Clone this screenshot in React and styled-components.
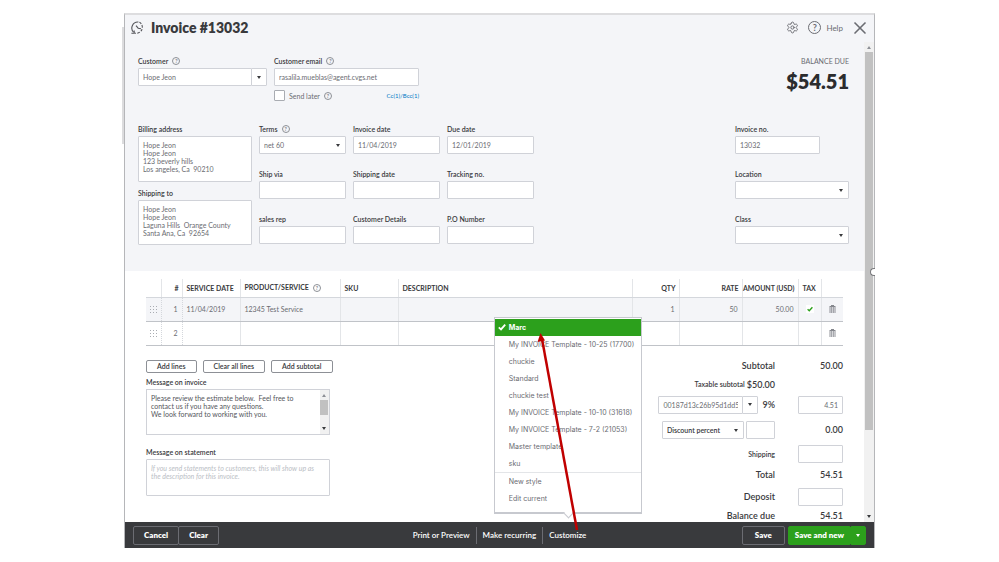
import React, { useId, useState } from 'react'
import styled, { createGlobalStyle } from 'styled-components'
import { Settings, X } from 'lucide-react'

const GlobalStyle = createGlobalStyle`
  * {
    box-sizing: border-box;
  }
  body {
    margin: 0;
    background: #fff;
    color: #393a3d;
    font-family: Lato, 'Liberation Sans', sans-serif;
    font-size: 7px;
  }
  button, input, select, textarea {
    margin: 0;
    font-family: inherit;
    font-size: inherit;
    color: inherit;
  }
`

const Page = styled.div`
  display: flex;
  height: 100vh;
  padding: 13px 124px 14px;
`
const Shell = styled.div`
  position: relative;
  flex: 1;
  min-width: 0;
  display: flex;
  flex-direction: column;
  border: solid #b5b6b9;
  border-width: 0 1px 0 1px;
  border-top: 2px solid #dddddf;

  &::before {
    content: '';
    position: absolute;
    top: 12px;
    left: -3px;
    width: 2px;
    height: 117px;
    background: #dcdcde;
  }
`
const Handle = styled.span`
  position: absolute;
  top: 253px;
  right: -1px;
  width: 5px;
  height: 8px;
  border: 1px solid #77787b;
  border-right: 0;
  border-radius: 4px 0 0 4px;
  background: #fff;
`
const Header = styled.header`
  display: flex;
  align-items: center;
  height: 27px;
  padding: 0 4px 2px 6px;
  background: #f4f5f8;
`
const Title = styled.h1`
  margin: 0 auto 0 6px;
  font-size: 14px;
  line-height: 16px;
  font-weight: 800;
`
const IconButton = styled.button`
  display: flex;
  align-items: center;
  gap: 5px;
  margin-left: ${props => (props.$tight ? 7 : 9)}px;
  padding: 0;
  border: 0;
  background: none;
  color: #6b6c72;
  font-size: 8px;
`
const Question = styled.span`
  display: inline-flex;
  align-items: center;
  justify-content: center;
  width: ${props => (props.$large ? 13 : 8)}px;
  height: ${props => (props.$large ? 13 : 8)}px;
  border: 1px solid ${props => (props.$large ? '#6b6c72' : '#8d9096')};
  border-radius: 50%;
  color: #6b6c72;
  font-size: ${props => (props.$large ? 9 : 6)}px;
  line-height: 1;
  font-weight: ${props => (props.$large ? 700 : 400)};
  vertical-align: middle;
`
const Body = styled.div`
  flex: 1;
  min-height: 0;
  display: flex;
  background: #f4f5f8;
`
const Content = styled.main`
  flex: 1;
  min-width: 0;
  overflow: hidden;
  background: #fff;
`
const ScrollTrack = styled.div`
  display: flex;
  flex-direction: column;
  align-items: center;
  width: 10px;
  padding: 4px 0;
  background: #f1f1f1;
`
const Thumb = styled.div`
  width: 8px;
  height: ${props => props.$size};
  margin: 3px 0 auto;
  background: #c1c1c1;
`
const Arrow = styled.span`
  width: 0;
  height: 0;
  border: 2px solid transparent;
  border-${props => (props.$up ? 'bottom' : 'top')}: 3px solid ${props => props.$color || '#393a3d'};
  border-${props => (props.$up ? 'top' : 'bottom')}: 0;
`

const FormSection = styled.section`
  padding: 14px 15px 26px 13px;
  background: #f4f5f8;
`
const FormRow = styled.div`
  display: flex;
  gap: 7px;
`
const TopRow = styled(FormRow)`
  height: 68px;
`
const Column = styled.div`
  display: flex;
  flex-direction: column;
  gap: ${props => props.$gap || 0}px;
  width: ${props => props.$width}px;
  margin-left: ${props => (props.$right ? 'auto' : 0)};
`
const FieldGrid = styled.div`
  display: grid;
  grid-template-columns: repeat(3, 87px);
  gap: 15px 7px;
  align-content: start;
`
const FieldBox = styled.div`
  display: flex;
  flex-direction: column;
  gap: 2px;
`
const Label = styled.label`
  display: flex;
  align-items: center;
  gap: 4px;
  height: 10px;
  font-size: 7px;
  line-height: 10px;
  font-weight: 600;
  white-space: nowrap;
`
const control = `
  border: 1px solid #d0d2d8;
  border-radius: 1px;
  background: #fff;
  color: #6b6c72;
  font-size: 7px;
  outline: 0;
`
const Input = styled.input`
  ${control}
  width: ${props => (props.$width ? `${props.$width}px` : '100%')};
  height: 18px;
  padding: 0 4px;
  text-align: ${props => props.$align || 'left'};
`
const SelectWrap = styled.div`
  position: relative;
  display: flex;
  width: ${props => (props.$width ? `${props.$width}px` : '100%')};

  ${Arrow} {
    position: absolute;
    right: 6px;
    top: 8px;
    pointer-events: none;
  }
`
const Select = styled.select`
  ${control}
  appearance: none;
  width: 100%;
  height: 18px;
  padding: 0 16px 0 4px;
  color: ${props => (props.$strong ? '#393a3d' : '#6b6c72')};
  font-weight: ${props => (props.$strong ? 600 : 400)};
`
const Combo = styled.div`
  display: flex;
  width: ${props => props.$width}px;

  ${Input} {
    flex: 1;
    min-width: 0;
  }
`
const ComboButton = styled.button`
  ${control}
  display: flex;
  align-items: center;
  justify-content: center;
  width: 16px;
  height: 18px;
  margin-left: -1px;
  padding: 0;
`
const TextArea = styled.textarea`
  ${control}
  display: block;
  width: 100%;
  height: ${props => props.$height}px;
  padding: 4px;
  line-height: 8px;
  resize: none;
  overflow: hidden;

  &::placeholder {
    color: #babec5;
    font-style: italic;
  }
`
const SendRow = styled.div`
  display: flex;
  align-items: center;
  gap: 4px;
  margin-top: 4px;
  color: #6b6c72;
`
const Checkbox = styled.input`
  appearance: none;
  width: 11px;
  height: 11px;
  margin: 0;
  border: 1px solid #a9acb2;
  border-radius: 1px;
  background: #fff;
`
const Link = styled.a`
  margin-left: auto;
  color: #0077c5;
  font-size: 6px;
  text-decoration: none;
`
const BalanceBox = styled.div`
  margin-left: auto;
  color: #6b6c72;
  line-height: 10px;
  text-align: right;
`
const BalanceAmount = styled.div`
  margin-top: 3px;
  color: #2b2c2e;
  font-size: 20px;
  line-height: 24px;
  font-weight: 800;
`

const Lines = styled.section`
  padding: 8px 21px 0;
`
const Table = styled.table`
  width: 100%;
  table-layout: fixed;
  border-collapse: collapse;
`
const Th = styled.th`
  width: ${props => (props.$width ? `${props.$width}px` : 'auto')};
  height: 18px;
  padding: ${props => (props.$align === 'right' ? '0 3px 0 0' : '0 0 0 4px')};
  border-right: 1px solid #e3e5e8;
  border-bottom: 1px solid #d4d7dc;
  font-weight: 700;
  text-align: ${props => props.$align || 'left'};
  white-space: nowrap;

  &:last-child {
    border-right: 0;
  }
  ${Question} {
    margin-left: 4px;
  }
`
const Td = styled.td`
  height: 24px;
  padding: 0 4px;
  border-right: ${props => (props.$dotted ? '1px dotted #d4d7dc' : '1px solid #e3e5e8')};
  border-bottom: 1px solid #c0c3c8;
  background: ${props => (props.$active ? '#f4f5f8' : '#fff')};
  color: #6b6c72;
  text-align: ${props => props.$align || 'left'};
  vertical-align: middle;

  &:last-child {
    border-right: 0;
  }
  svg {
    display: block;
    margin: 0 auto;
  }
`
const CheckTile = styled.span`
  display: block;
  width: 8px;
  margin: 0 auto;
  padding: 1px;
  background: #fff;
`
const CellButton = styled.button`
  display: block;
  margin: 0 auto;
  padding: 0;
  border: 0;
  background: none;
`

const Lower = styled.section`
  display: flex;
  justify-content: space-between;
  padding: 14px 21px 0;
`
const ButtonRow = styled.div`
  display: flex;
  gap: 6px;
  margin-bottom: 4px;
`
const SmallButton = styled.button`
  height: 13px;
  padding: 0 10px;
  border: 1px solid #8d9096;
  border-radius: 2px;
  background: #fff;
  font-size: 7px;
  line-height: 9px;
  font-weight: 600;
  white-space: nowrap;
`
const Messages = styled.div`
  width: 184px;

  ${FieldBox} {
    margin-bottom: 12px;
  }
`
const ScrollingArea = styled.div`
  display: flex;
  border: 1px solid #d0d2d8;

  ${TextArea} {
    border: 0;
    color: #55565b;
  }
`
const Totals = styled.div`
  display: grid;
  grid-template-columns: auto 45px;
  grid-template-rows: 12px 25px 16px 34px 14px 28px 16px 22px;
  column-gap: 23px;
  align-content: start;
  align-items: center;
  justify-items: end;
  font-size: 9px;
  font-weight: 600;
`
const TotalLabel = styled.label`
  font-size: ${props => (props.$small ? 7 : 9)}px;
  white-space: nowrap;
`
const Inline = styled.div`
  display: flex;
  align-items: center;
  gap: ${props => props.$gap}px;
`

const Footer = styled.footer`
  display: flex;
  align-items: center;
  justify-content: space-between;
  height: 26px;
  padding: 0 8px;
  background: #393a3d;
  color: #fff;
`
const FooterGroup = styled.div`
  flex: ${props => (props.$center ? 'none' : '1')};
  display: flex;
  justify-content: ${props => (props.$end ? 'flex-end' : 'flex-start')};
`
const FooterButton = styled.button`
  height: 19px;
  padding: 0 ${props => props.$pad || 10}px;
  border: 1px solid ${props => (props.$primary ? '#2ca01c' : '#6b6c72')};
  border-radius: 2px;
  background: ${props => (props.$primary ? '#2ca01c' : 'transparent')};
  font-size: 8px;
  font-weight: 800;
  white-space: nowrap;

  & + & {
    margin-left: -1px;
  }
`
const SplitButton = styled.div`
  display: flex;
  margin-left: 3px;
`
const FooterLink = styled.button`
  height: 17px;
  padding: 0 6px;
  border: 0;
  background: none;
  font-size: 8px;
  font-weight: 600;
  white-space: nowrap;
`
const FooterItem = styled.div`
  position: relative;
  display: flex;

  & + & {
    border-left: 1px solid #6b6c72;
  }
`
const Menu = styled.div`
  position: absolute;
  bottom: 30px;
  left: 50%;
  width: 148px;
  margin-left: -74px;
  padding: 1px 0 5px;
  border: 1px solid #c7c9cf;
  border-bottom-width: 2px;
  background: #fff;
  font-family: Inter, 'Liberation Sans', sans-serif;

  &::after {
    content: '';
    position: absolute;
    left: 50%;
    bottom: -5px;
    width: 6px;
    height: 6px;
    margin-left: -3px;
    border: solid #c7c9cf;
    border-width: 0 1px 1px 0;
    background: #fff;
    transform: rotate(45deg);
  }
`
const MenuItem = styled.button`
  display: flex;
  align-items: center;
  width: 100%;
  height: 17px;
  padding: 0 0 0 3px;
  border: 0;
  background: ${props => (props.$selected ? '#2ca01c' : '#fff')};
  color: ${props => (props.$selected ? '#fff' : '#6b6c72')};
  font-size: 7px;
  font-weight: ${props => (props.$selected ? 700 : 400)};
  white-space: nowrap;
`
const MenuMark = styled.span`
  flex: none;
  display: flex;
  width: 11px;
`
const MenuDivider = styled.div`
  height: 1px;
  background: #e3e5e8;
`
const Pointer = styled.svg`
  position: absolute;
  bottom: 13px;
  left: 50%;
  margin-left: -32px;
  pointer-events: none;
`

const lines = [
  { id: 1, date: '11/04/2019', product: '12345 Test Service', qty: 1, rate: 50, amount: '50.00', taxed: true },
  { id: 2 },
]

const templates = [
  'Marc',
  'My INVOICE Template - 10-25 (17700)',
  'chuckie',
  'Standard',
  'chuckie test',
  'My INVOICE Template - 10-10 (31618)',
  'My INVOICE Template - 7-2 (21053)',
  'Master template',
  'sku',
]

function HistoryIcon() {
  return (
    <svg width='14' height='14' viewBox='0 0 14 14' fill='none' stroke='#55565b' strokeWidth='1.1'>
      <path d='M2.6 11.2A6 6 0 0 1 7.4 1' />
      <path d='M8.4 1.1A6 6 0 0 1 3.6 12' strokeDasharray='2.6 1.3' />
      <path d='M.4 12.2H3.2V9.4' />
      <path d='M5 4.6L7.2 7.2L10 7.8' />
    </svg>
  )
}

function CheckIcon({ size, color }) {
  return (
    <svg width={size} height={size} viewBox='0 0 8 8' fill='none' stroke={color} strokeWidth='1.8'>
      <path d='M.8 4.4L3 6.4L7.2 1.6' />
    </svg>
  )
}

function GripIcon() {
  return (
    <svg width='7' height='7' viewBox='0 0 7 7' fill='#a9acb2'>
      {[0, 3, 6].map(y => [0, 3, 6].map(x => <rect key={`${x}${y}`} x={x} y={y} width='1' height='1' />))}
    </svg>
  )
}

function TrashIcon() {
  return (
    <svg width='7' height='8' viewBox='0 0 7 8' fill='none' stroke='#85878d'>
      <path d='M.5 1.5H6.5M2 .5H5' />
      <path d='M1 2V8M2.7 2V8M4.3 2V8M6 2V8' strokeWidth='.9' />
    </svg>
  )
}

function Field({ label, help, children }) {
  const id = useId()
  return (
    <FieldBox>
      <Label htmlFor={id}>
        {label}
        {help && <Question>?</Question>}
      </Label>
      {children(id)}
    </FieldBox>
  )
}

function TextField({ label, value = '', width, help }) {
  return (
    <Field label={label} help={help}>
      {id => <Input id={id} defaultValue={value} $width={width} />}
    </Field>
  )
}

function SelectField({ label, value = '', help }) {
  return (
    <Field label={label} help={help}>
      {id => (
        <SelectWrap>
          <Select id={id}>
            <option>{value}</option>
          </Select>
          <Arrow />
        </SelectWrap>
      )}
    </Field>
  )
}

function InvoiceForm() {
  return (
    <FormSection>
      <TopRow>
        <Column $width={129}>
          <Field label='Customer' help>
            {id => (
              <Combo $width={129}>
                <Input id={id} defaultValue='Hope Jeon' />
                <ComboButton aria-label='Show customers'>
                  <Arrow />
                </ComboButton>
              </Combo>
            )}
          </Field>
        </Column>
        <Column $width={145}>
          <TextField label='Customer email' value='rasalila.mueblas@agent.cvgs.net' help />
          <SendRow>
            <Checkbox type='checkbox' id='send-later' />
            <label htmlFor='send-later'>Send later</label>
            <Question>?</Question>
            <Link href='#cc'>Cc(1)/Bcc(1)</Link>
          </SendRow>
        </Column>
        <BalanceBox>
          BALANCE DUE
          <BalanceAmount>$54.51</BalanceAmount>
        </BalanceBox>
      </TopRow>
      <FormRow>
        <Column $width={114} $gap={6}>
          <Field label='Billing address'>
            {id => (
              <TextArea
                id={id}
                $height={46}
                defaultValue={'Hope Jeon\nHope Jeon\n123 beverly hills\nLos angeles, Ca  90210'}
              />
            )}
          </Field>
          <Field label='Shipping to'>
            {id => (
              <TextArea
                id={id}
                $height={45}
                defaultValue={'Hope Jeon\nHope Jeon\nLaguna Hills  Orange County\nSanta Ana, Ca  92654'}
              />
            )}
          </Field>
        </Column>
        <FieldGrid>
          <SelectField label='Terms' value='net 60' help />
          <TextField label='Invoice date' value='11/04/2019' />
          <TextField label='Due date' value='12/01/2019' />
          <TextField label='Ship via' />
          <TextField label='Shipping date' />
          <TextField label='Tracking no.' />
          <TextField label='sales rep' />
          <TextField label='Customer Details' />
          <TextField label='P.O Number' />
        </FieldGrid>
        <Column $width={114} $gap={15} $right>
          <TextField label='Invoice no.' value='13032' width={85} />
          <SelectField label='Location' />
          <SelectField label='Class' />
        </Column>
      </FormRow>
    </FormSection>
  )
}

function LineTable() {
  return (
    <Lines>
      <Table>
        <thead>
          <tr>
            <Th $width={15} />
            <Th $width={21} $align='right'>#</Th>
            <Th $width={58}>SERVICE DATE</Th>
            <Th $width={100}>
              PRODUCT/SERVICE<Question>?</Question>
            </Th>
            <Th $width={58}>SKU</Th>
            <Th>DESCRIPTION</Th>
            <Th $width={47} $align='right'>QTY</Th>
            <Th $width={63} $align='right'>RATE</Th>
            <Th $width={56} $align='right'>AMOUNT (USD)</Th>
            <Th $width={23}>TAX</Th>
            <Th $width={22} />
          </tr>
        </thead>
        <tbody>
          {lines.map(line => (
            <tr key={line.id}>
              <Td $active={line.taxed} $dotted><GripIcon /></Td>
              <Td $active={line.taxed} $dotted $align='right'>{line.id}</Td>
              <Td $active={line.taxed}>{line.date}</Td>
              <Td $active={line.taxed}>{line.product}</Td>
              <Td $active={line.taxed} />
              <Td $active={line.taxed} />
              <Td $active={line.taxed} $align='right'>{line.qty}</Td>
              <Td $active={line.taxed} $align='right'>{line.rate}</Td>
              <Td $active={line.taxed} $align='right'>{line.amount}</Td>
              <Td $active={line.taxed}>
                {line.taxed && <CheckTile><CheckIcon size={6} color='#2ca01c' /></CheckTile>}
              </Td>
              <Td $active={line.taxed}>
                <CellButton aria-label={`Delete line ${line.id}`}><TrashIcon /></CellButton>
              </Td>
            </tr>
          ))}
        </tbody>
      </Table>
    </Lines>
  )
}

function InvoiceTotals() {
  return (
    <Totals>
      <span>Subtotal</span>
      <span>50.00</span>

      <Inline $gap={2}>
        <TotalLabel as='span' $small>Taxable subtotal</TotalLabel>
        <span>$50.00</span>
      </Inline>
      <span />

      <Inline $gap={4}>
        <Combo $width={100}>
          <Input aria-label='Tax rate' defaultValue='00187d13c26b95d1dd5' />
          <ComboButton aria-label='Show tax rates'><Arrow /></ComboButton>
        </Combo>
        <span>9%</span>
      </Inline>
      <Input aria-label='Tax amount' defaultValue='4.51' $align='right' />

      <Inline $gap={2}>
        <SelectWrap $width={82}>
          <Select aria-label='Discount type' $strong>
            <option>Discount percent</option>
          </Select>
          <Arrow />
        </SelectWrap>
        <Input aria-label='Discount' $width={29} />
      </Inline>
      <span>0.00</span>

      <TotalLabel htmlFor='shipping' $small>Shipping</TotalLabel>
      <Input id='shipping' />

      <span>Total</span>
      <span>54.51</span>

      <TotalLabel htmlFor='deposit'>Deposit</TotalLabel>
      <Input id='deposit' />

      <span>Balance due</span>
      <span>54.51</span>
    </Totals>
  )
}

function CustomizeMenu() {
  const [selected, setSelected] = useState('Marc')
  return (
    <Menu>
      {templates.map(name => (
        <MenuItem key={name} $selected={name === selected} onClick={() => setSelected(name)}>
          <MenuMark>{name === selected && <CheckIcon size={8} color='#fff' />}</MenuMark>
          {name}
        </MenuItem>
      ))}
      <MenuDivider />
      <MenuItem><MenuMark />New style</MenuItem>
      <MenuItem><MenuMark />Edit current</MenuItem>
    </Menu>
  )
}

export default function App() {
  return (
    <Page>
      <GlobalStyle />
      <Shell>
        <Header>
          <HistoryIcon />
          <Title>Invoice #13032</Title>
          <IconButton aria-label='Settings'><Settings size={13} strokeWidth={1.8} /></IconButton>
          <IconButton><Question $large>?</Question>Help</IconButton>
          <IconButton $tight aria-label='Close'><X size={20} strokeWidth={2} /></IconButton>
        </Header>
        <Body>
          <Content>
            <InvoiceForm />
            <LineTable />
            <Lower>
              <Messages>
                <ButtonRow>
                  <SmallButton>Add lines</SmallButton>
                  <SmallButton>Clear all lines</SmallButton>
                  <SmallButton>Add subtotal</SmallButton>
                </ButtonRow>
                <Field label='Message on invoice'>
                  {id => (
                    <ScrollingArea>
                      <TextArea
                        id={id}
                        $height={44}
                        defaultValue={'Please review the estimate below.  Feel free to contact us if you have any questions.\nWe look forward to working with you.'}
                      />
                      <ScrollTrack>
                        <Arrow $up $color='#8d9096' />
                        <Thumb $size='15px' />
                        <Arrow />
                      </ScrollTrack>
                    </ScrollingArea>
                  )}
                </Field>
                <Field label='Message on statement'>
                  {id => (
                    <TextArea
                      id={id}
                      $height={37}
                      placeholder='If you send statements to customers, this will show up as the description for this invoice.'
                    />
                  )}
                </Field>
              </Messages>
              <InvoiceTotals />
            </Lower>
          </Content>
          <ScrollTrack>
            <Arrow $up $color='#8d9096' />
            <Thumb $size='80%' />
            <Arrow />
          </ScrollTrack>
        </Body>
        <Footer>
          <FooterGroup>
            <FooterButton>Cancel</FooterButton>
            <FooterButton>Clear</FooterButton>
          </FooterGroup>
          <FooterGroup $center>
            <FooterItem><FooterLink>Print or Preview</FooterLink></FooterItem>
            <FooterItem><FooterLink>Make recurring</FooterLink></FooterItem>
            <FooterItem>
              <FooterLink>Customize</FooterLink>
              <CustomizeMenu />
              <Pointer width='48' height='198' viewBox='0 0 48 198'>
                <path d='M41 197L6 6' stroke='#c00000' strokeWidth='2.5' />
                <path d='M4.5 0L9 7.5L1.5 9Z' fill='#c00000' />
              </Pointer>
            </FooterItem>
          </FooterGroup>
          <FooterGroup $end>
            <FooterButton $pad={12}>Save</FooterButton>
            <SplitButton>
              <FooterButton $primary $pad={6}>Save and new</FooterButton>
              <FooterButton $primary $pad={5} aria-label='More save options'>
                <Arrow $color='#fff' style={{ display: 'block' }} />
              </FooterButton>
            </SplitButton>
          </FooterGroup>
        </Footer>
        <Handle />
      </Shell>
    </Page>
  )
}
